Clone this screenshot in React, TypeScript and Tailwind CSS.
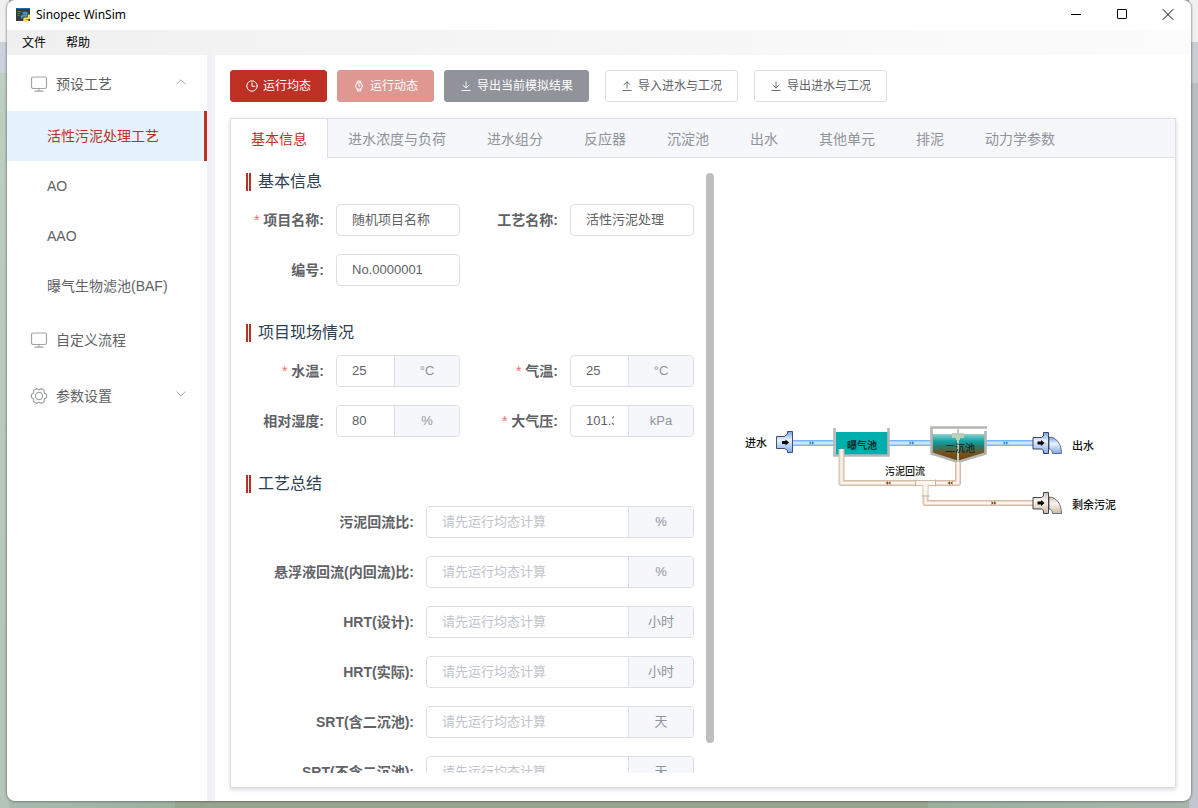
import { useState, type ReactNode } from "react";
import clsx from "clsx";

const TABS = [
    "基本信息",
    "进水浓度与负荷",
    "进水组分",
    "反应器",
    "沉淀池",
    "出水",
    "其他单元",
    "排泥",
    "动力学参数",
];

const PROCESSES = ["活性污泥处理工艺", "AO", "AAO", "曝气生物滤池(BAF)"];

const SUMMARY = [
    { id: "return-ratio", label: "污泥回流比:", unit: "%" },
    { id: "inner-ratio", label: "悬浮液回流(内回流)比:", unit: "%" },
    { id: "hrt-design", label: "HRT(设计):", unit: "小时" },
    { id: "hrt-actual", label: "HRT(实际):", unit: "小时" },
    { id: "srt-with", label: "SRT(含二沉池):", unit: "天" },
    { id: "srt-without", label: "SRT(不含二沉池):", unit: "天" },
];

function Icon({ children, size = 12 }: { children: ReactNode; size?: number }) {
    return (
        <svg
            width={size}
            height={size}
            viewBox={`0 0 ${size} ${size}`}
            fill="none"
            stroke="currentColor"
            strokeLinecap="round"
            strokeLinejoin="round"
            className="shrink-0"
            aria-hidden="true"
        >
            {children}
        </svg>
    );
}

const ClockIcon = () => (
    <Icon>
        <circle cx="6" cy="6" r="5.2" />
        <path d="M6 2.8V6.3H8.8" />
    </Icon>
);

const WatchIcon = () => (
    <Icon>
        <circle cx="6" cy="6" r="3.4" />
        <path d="M4.2 2.8L4.5 1H7.5L7.8 2.8M4.2 9.2L4.5 11H7.5L7.8 9.2M6 4.4V6.2H7" />
    </Icon>
);

const DownloadIcon = () => (
    <Icon>
        <path d="M6 1.8V7.8M3 5.2L6 8L9 5.2M1.8 10.5H10.2" strokeWidth="0.9" />
    </Icon>
);

const UploadIcon = () => (
    <Icon>
        <path d="M6 8.2V2M3 4.7L6 1.9L9 4.7M1.8 10.5H10.2" strokeWidth="0.9" />
    </Icon>
);

const MonitorIcon = () => (
    <Icon size={18}>
        <rect x="1.5" y="2" width="15" height="11.5" rx="1.8" strokeWidth="1.2" />
        <path d="M9 13.5V15.8M4.8 16.2H13.2" strokeWidth="1.2" />
    </Icon>
);

const GearIcon = () => (
    <Icon size={18}>
        <path
            d="M16.6 7.4V10.6L14.4 12.1L14.2 14.8L11.4 16.4L9 15.2L6.6 16.4L3.8 14.8L3.6 12.1L1.4 10.6V7.4L3.6 5.9L3.8 3.2L6.6 1.6L9 2.8L11.4 1.6L14.2 3.2L14.4 5.9Z"
            strokeWidth="1.2"
        />
        <circle cx="9" cy="9" r="3.6" strokeWidth="1.2" />
    </Icon>
);

function Chevron({ up = false }: { up?: boolean }) {
    return (
        <span className="ml-auto pb-1 text-[#909399]">
            <Icon>
                <path d={up ? "M1.8 8L6 3.8L10.2 8" : "M1.8 3.8L6 8L10.2 3.8"} strokeWidth="0.8" />
            </Icon>
        </span>
    );
}

function TitleBar() {
    return (
        <header className="flex h-[30px] shrink-0 items-center pl-[9px]">
            <svg width="15" height="15" viewBox="0 0 15 15" aria-hidden="true">
                <path d="M0 0H14V13H0Z" fill="#353a3d" />
                <path d="M0 0H14V1H0Z" fill="#1c6fb5" />
                <path d="M1.5 3.5H5M1.5 5.5H4M1.5 7.5H3.5" stroke="#3c9a4d" />
                <path d="M6.5 4.2Q9 3 11.5 4.2V7.5Q11.5 8.8 10 8.8H7.5Q6.3 8.8 6.3 10.5H5Q3.8 7.5 6 6.8H9V6.2H6.5Z" fill="#4f8fc4" />
                <path d="M12 6.4H13.5Q15.4 9 13.5 11H10.2V11.6H12.4V13.2Q10 14.8 7.3 13.2V10.4Q7.3 9.4 8.6 9.4H11Q12 9.2 12 8Z" fill="#ffdf4d" />
            </svg>
            <span className="ml-[5px] font-['Noto_Sans',sans-serif] text-xs text-black">Sinopec WinSim</span>
            <div className="ml-auto flex h-full text-black">
                <button aria-label="最小化" className="flex w-[46px] items-center justify-center">
                    <Icon>
                        <path d="M1 5.5H11" strokeLinecap="butt" />
                    </Icon>
                </button>
                <button aria-label="最大化" className="flex w-[46px] items-center justify-center">
                    <Icon>
                        <rect x="1.5" y="0.5" width="9" height="9" rx="0.6" />
                    </Icon>
                </button>
                <button aria-label="关闭" className="flex w-[46px] items-center justify-center">
                    <Icon>
                        <path d="M1 0.5L11 10.5M11 0.5L1 10.5" />
                    </Icon>
                </button>
            </div>
        </header>
    );
}

function Sidebar() {
    const [active, setActive] = useState(PROCESSES[0]);
    const rowClass = "flex h-14 w-full items-center px-5 pt-0.5";
    const iconClass = "mr-[5px] flex w-6 justify-center text-[#a0a3a8]";

    return (
        <nav className="w-[200px] shrink-0 text-sm text-[#606266]">
            <button className={rowClass}>
                <span className={iconClass}>
                    <MonitorIcon />
                </span>
                预设工艺
                <Chevron up />
            </button>
            {PROCESSES.map((name) => (
                <button
                    key={name}
                    onClick={() => setActive(name)}
                    className={clsx(
                        "flex h-[50px] w-full items-center pl-10",
                        active === name && "border-r-[3px] border-[#be2f24] bg-[#e5f3ff] text-[#be2f24]"
                    )}
                >
                    {name}
                </button>
            ))}
            <button className={rowClass}>
                <span className={iconClass}>
                    <MonitorIcon />
                </span>
                自定义流程
            </button>
            <button className={rowClass}>
                <span className={iconClass}>
                    <GearIcon />
                </span>
                参数设置
                <Chevron />
            </button>
        </nav>
    );
}

function ActionButton({ icon, className, children }: { icon: ReactNode; className: string; children: ReactNode }) {
    return (
        <button className={clsx("flex h-8 items-center gap-[5px] rounded-[3px] border px-[15px] text-xs", className)}>
            {icon}
            {children}
        </button>
    );
}

function Toolbar() {
    return (
        <div className="flex shrink-0 gap-4">
            <div className="flex gap-2.5">
                <ActionButton icon={<ClockIcon />} className="border-[#be2f24] bg-[#be2f24] text-white">
                    运行均态
                </ActionButton>
                <ActionButton icon={<WatchIcon />} className="border-[#df9791] bg-[#df9791] text-white">
                    运行动态
                </ActionButton>
                <ActionButton icon={<DownloadIcon />} className="border-[#909399] bg-[#909399] text-white">
                    导出当前模拟结果
                </ActionButton>
            </div>
            <ActionButton icon={<UploadIcon />} className="border-[#dcdfe6] bg-white text-[#606266]">
                导入进水与工况
            </ActionButton>
            <ActionButton icon={<DownloadIcon />} className="border-[#dcdfe6] bg-white text-[#606266]">
                导出进水与工况
            </ActionButton>
        </div>
    );
}

type FieldProps = {
    id: string;
    label: string;
    value?: string;
    unit?: string;
    placeholder?: string;
    required?: boolean;
    wide?: boolean;
};

function Field({ id, label, value, unit, placeholder, required, wide }: FieldProps) {
    return (
        <div className="flex h-8 items-center">
            <label
                htmlFor={id}
                className={clsx(
                    "shrink-0 pr-3 text-right text-sm font-bold whitespace-nowrap text-[#606266]",
                    wide ? "w-[180px]" : "w-[90px]"
                )}
            >
                {required && <span className="mr-1 font-normal text-[#f56c6c]">*</span>}
                {label}
            </label>
            <div className="flex h-8 min-w-0 flex-1 overflow-hidden rounded border border-[#dcdfe6] text-[13px]">
                <input
                    id={id}
                    defaultValue={value}
                    placeholder={placeholder}
                    className="min-w-0 flex-1 pr-3.5 pl-[15px] text-[#606266] outline-none placeholder:text-[#c0c4cc]"
                />
                {unit && (
                    <span className="flex w-[65px] shrink-0 items-center justify-center border-l border-[#dcdfe6] bg-[#f5f7fb] text-[#909399]">
                        {unit}
                    </span>
                )}
            </div>
        </div>
    );
}

function Section({ title, children }: { title: string; children: ReactNode }) {
    return (
        <section>
            <h2 className="mb-[13px] flex h-[18px] items-center gap-[7px] text-base text-[#2c3e50]">
                <span className="h-full w-[5px] border-x-2 border-[#be2f24]" />
                {title}
            </h2>
            {children}
        </section>
    );
}

function InfoForm() {
    const gridClass = "grid grid-cols-2 gap-x-5 gap-y-[18px]";
    return (
        <form className="flex min-w-0 flex-1 flex-col gap-[38px] overflow-hidden">
            <Section title="基本信息">
                <div className={gridClass}>
                    <Field id="project" label="项目名称:" value="随机项目名称" required />
                    <Field id="process" label="工艺名称:" value="活性污泥处理" />
                    <Field id="serial" label="编号:" value="No.0000001" />
                </div>
            </Section>
            <Section title="项目现场情况">
                <div className={gridClass}>
                    <Field id="water-temp" label="水温:" value="25" unit="°C" required />
                    <Field id="air-temp" label="气温:" value="25" unit="°C" required />
                    <Field id="humidity" label="相对湿度:" value="80" unit="%" />
                    <Field id="pressure" label="大气压:" value="101.325" unit="kPa" required />
                </div>
            </Section>
            <Section title="工艺总结">
                <div className="flex flex-col gap-[18px]">
                    {SUMMARY.map((item) => (
                        <Field key={item.id} {...item} placeholder="请先运行均态计算" wide />
                    ))}
                </div>
            </Section>
        </form>
    );
}

function Pipe({ d, tone }: { d: string; tone: "blue" | "sand" }) {
    const [edge, body, shine] = tone === "blue" ? ["#7fb2fa", "#a9cdfd", "#cfe3ff"] : ["#d3bcaa", "#ead9ca", "#fbf5ef"];
    return (
        <g fill="none" strokeLinejoin="round">
            <path d={d} stroke={edge} strokeWidth="6" />
            <path d={d} stroke={body} strokeWidth="4" />
            <path d={d} stroke={shine} strokeWidth="2" />
        </g>
    );
}

// Double arrowhead that marks the flow direction on a pipe
function Flow({ x, y, color, left }: { x: number; y: number; color: string; left?: boolean }) {
    return (
        <path
            transform={`translate(${x} ${y})${left ? " scale(-1 1)" : ""}`}
            d="M-2.5 -1.8L0 0L-2.5 1.8ZM0 -1.8L2.5 0L0 1.8Z"
            fill={color}
        />
    );
}

function Arrow({ x, y }: { x: number; y: number }) {
    return <path transform={`translate(${x} ${y})`} d="M0 -1.4H3.5V-3L7 0L3.5 3V1.4H0Z" fill="#000" />;
}

function Outlet({ y, fill }: { y: number; fill: string }) {
    return (
        <g transform={`translate(293 ${y})`}>
            <path
                d="M16 5C24 5 28.5 13 28.5 21.5H19.5C19.5 19.5 18.5 17 16 17Z"
                fill={fill}
                stroke="#4a5360"
                strokeWidth="0.8"
            />
            <path
                d="M0 5.5H8.5L10.5 4V0.5H15.5V21.5H10.5V18.5L8.5 17H0Z"
                fill={fill}
                stroke="#2e3744"
                strokeWidth="0.9"
            />
            <Arrow x={4.5} y={11} />
        </g>
    );
}

function ProcessDiagram() {
    return (
        <svg
            viewBox="0 0 394 106"
            className="w-[394px] max-w-full font-['Noto_Sans_CJK_SC',sans-serif] font-medium"
            role="img"
            aria-label="活性污泥处理工艺流程"
        >
            <defs>
                <linearGradient id="steel" x1="0" y1="0" x2="0" y2="1">
                    <stop offset="0" stopColor="#6f9fe8" />
                    <stop offset="0.4" stopColor="#eaf2ff" />
                    <stop offset="1" stopColor="#7fa9ee" />
                </linearGradient>
                <linearGradient id="clay" x1="0" y1="0" x2="0" y2="1">
                    <stop offset="0" stopColor="#d3bfae" />
                    <stop offset="0.4" stopColor="#fbf5ef" />
                    <stop offset="1" stopColor="#cfb8a5" />
                </linearGradient>
                <linearGradient id="settling" x1="0" y1="0" x2="0" y2="1">
                    <stop offset="0" stopColor="#8fd0cf" />
                    <stop offset="0.25" stopColor="#13a5a5" />
                    <stop offset="0.45" stopColor="#2c7a6c" />
                    <stop offset="0.7" stopColor="#79501b" />
                    <stop offset="1" stopColor="#6e420e" />
                </linearGradient>
            </defs>

            <Pipe d="M53 23H94" tone="blue" />
            <Pipe d="M149 23H191" tone="blue" />
            <Pipe d="M246 23H294" tone="blue" />
            <Flow x={72} y={23} color="#3f86ef" />
            <Flow x={172} y={23} color="#3f86ef" />
            <Flow x={266} y={23} color="#3f86ef" />

            <path
                d="M36.5 16.5H44.5L47.5 14V11.5H52.5V32.5H47.5V30.5L44.5 28.5H36.5Z"
                fill="url(#steel)"
                stroke="#2e3f60"
                strokeWidth="0.9"
            />
            <Arrow x={42} y={22.5} />

            <path d="M96 12H148V35H96Z" fill="#00aeae" />
            <path d="M94.5 8V35.5H148.5V8" fill="none" stroke="#b5b8b2" strokeWidth="2.6" />

            <path d="M192 14H246V34L218 42L192 34Z" fill="url(#settling)" />
            <path d="M247 7.5H191.5V33.5L218 42L245.5 33.5V11" fill="none" stroke="#b3b6b0" strokeWidth="2.6" />
            <path d="M218 8V42" stroke="#bcd0b8" strokeWidth="2" />
            <path d="M212 13H224V18H220V20H216V18H212Z" fill="#bcd0b8" />

            <Pipe d="M101.5 29V63H218V42" tone="sand" />
            <Pipe d="M185.5 65V83H294" tone="sand" />
            <path d="M175.5 59.5V66.5M195.5 59.5V66.5M181.5 76H189.5" stroke="#cdb49f" />
            <path d="M176 63H195M185.5 63V75" stroke="#fbf5ef" strokeWidth="4" />
            <Flow x={148} y={63} color="#7a551c" left />
            <Flow x={210} y={63} color="#7a551c" left />
            <Flow x={254} y={83} color="#7a551c" />

            <Outlet y={12} fill="url(#steel)" />
            <Outlet y={72} fill="url(#clay)" />

            <g fill="#111" fontSize="11">
                <text x="5" y="27">进水</text>
                <text x="332" y="30">出水</text>
                <text x="332" y="89">剩余污泥</text>
            </g>
            <g fontSize="10">
                <text x="107" y="29" fill="#06302f" fontWeight="700">曝气池</text>
                <text x="205" y="32" fill="#10291f">二沉池</text>
                <text x="145" y="55" fill="#111">污泥回流</text>
            </g>
        </svg>
    );
}

export default function App() {
    const [tab, setTab] = useState(TABS[0]);

    return (
        <div className="h-screen px-[7px] pb-[7px] font-['Liberation_Sans','Noto_Sans_CJK_SC',sans-serif] [background:linear-gradient(#f0f0f0_0_42px,#cdd1dc_42px_73px,#bccfc0_73px,#b3c5b7)_0_0/9px_100%_no-repeat,linear-gradient(#f0f0f0_0_42px,#c9ced5_42px_83px,#b9bec4_83px_640px,#c3c5cf_640px)_100%_0/9px_100%_no-repeat,linear-gradient(to_right,#a9bbb0,#9bb09f_175px,#95a58f_175px_928px,#9bb09f_928px,#a9b5ac)]">
            <div className="flex h-full flex-col overflow-hidden rounded-lg bg-white shadow-[0_0_2px_1px_rgba(0,0,0,0.3)]">
                <TitleBar />
                <div className="flex h-[25px] shrink-0 items-center gap-5 bg-linear-to-r from-[#f0f0f0] to-[#fcfcfc] pl-[15px] text-xs text-black">
                    <button>文件</button>
                    <button>帮助</button>
                </div>
                <div className="flex min-h-0 flex-1">
                    <Sidebar />
                    <main className="flex min-w-0 flex-1 flex-col gap-4 border-l-8 border-[#f0f2f7] pt-[15px] pr-[15px] pb-[13px] pl-[15px]">
                        <Toolbar />
                        <div className="flex min-h-0 flex-1 flex-col border border-[#dcdfe6] shadow-[0_2px_4px_rgba(0,0,0,0.12),0_0_6px_rgba(0,0,0,0.04)]">
                            <div role="tablist" className="flex h-[39px] shrink-0 border-b border-[#dcdfe6] bg-[#f5f7fb] text-sm">
                                {TABS.map((name) => (
                                    <button
                                        key={name}
                                        role="tab"
                                        aria-selected={tab === name}
                                        onClick={() => setTab(name)}
                                        className={clsx(
                                            "-mb-px border-r px-5 whitespace-nowrap",
                                            tab === name
                                                ? "border-[#dcdfe6] bg-white text-[#be2f24]"
                                                : "border-transparent text-[#909399]"
                                        )}
                                    >
                                        {name}
                                    </button>
                                ))}
                            </div>
                            <div className="grid min-h-0 flex-1 grid-cols-[468fr_446fr] px-[15px] pt-[15px] pb-3.5">
                                <div className="flex min-h-0 min-w-0 gap-3">
                                    <InfoForm />
                                    <div className="w-2 shrink-0">
                                        <div className="h-[95%] rounded-full bg-[#bfbfbf]" />
                                    </div>
                                </div>
                                <div className="flex min-w-0 items-center justify-center">
                                    <ProcessDiagram />
                                </div>
                            </div>
                        </div>
                    </main>
                </div>
            </div>
        </div>
    );
}
